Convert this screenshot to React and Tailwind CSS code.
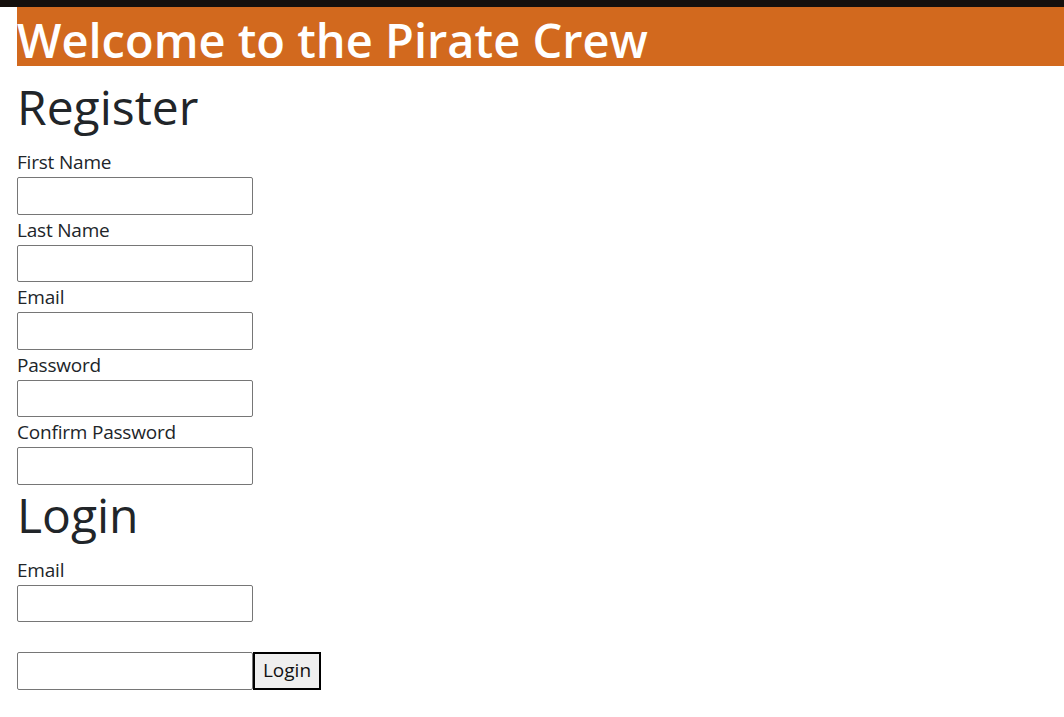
const fontStack = { fontFamily: '"Open Sans", "Noto Sans", sans-serif' };

function Field({ label, type = 'text' }) {
  return (
    <div>
      <label className="block h-[30px] text-[19px] leading-[30px] tracking-[-0.2px] text-[#212529]">{label}</label>
      <input
        type={type}
        className="block h-[37.5px] w-[236px] rounded-[2px] border border-[#767676] bg-white"
      />
    </div>
  );
}

export default function App() {
  return (
    <div className="min-h-screen bg-white text-[#212529]" style={fontStack}>
      {/* top strip */}
      <div className="h-[7px] w-full bg-[#15100d]" />

      <div className="pl-[17px]">
        <h1 className="mb-[11px] h-[59px] bg-[#d2691e] pt-[7px] text-[47px] font-semibold leading-[52px] text-white">
          Welcome to the Pirate Crew
        </h1>

        {/* Register */}
        <h2 className="mb-[10px] text-[48px] font-medium leading-[60px]">Register</h2>
        <Field label="First Name" />
        <Field label="Last Name" />
        <Field label="Email" type="email" />
        <Field label="Password" type="password" />
        <Field label="Confirm Password" type="password" />

        {/* Login */}
        <h2 className="mb-[10px] text-[48px] font-medium leading-[60px]">Login</h2>
        <Field label="Email" type="email" />
        <div>
          <label className="block h-[30px] text-[19px] leading-[30px]" />
          <div className="flex">
            <input
              type="password"
              className="block h-[37.5px] w-[236px] rounded-[2px] border border-[#767676] bg-white"
            />
            <button className="h-[37.5px] w-[68px] border-2 border-black bg-[#efefef] text-[19px] leading-none text-[#111]">
              Login
            </button>
          </div>
        </div>
      </div>
    </div>
  );
}
